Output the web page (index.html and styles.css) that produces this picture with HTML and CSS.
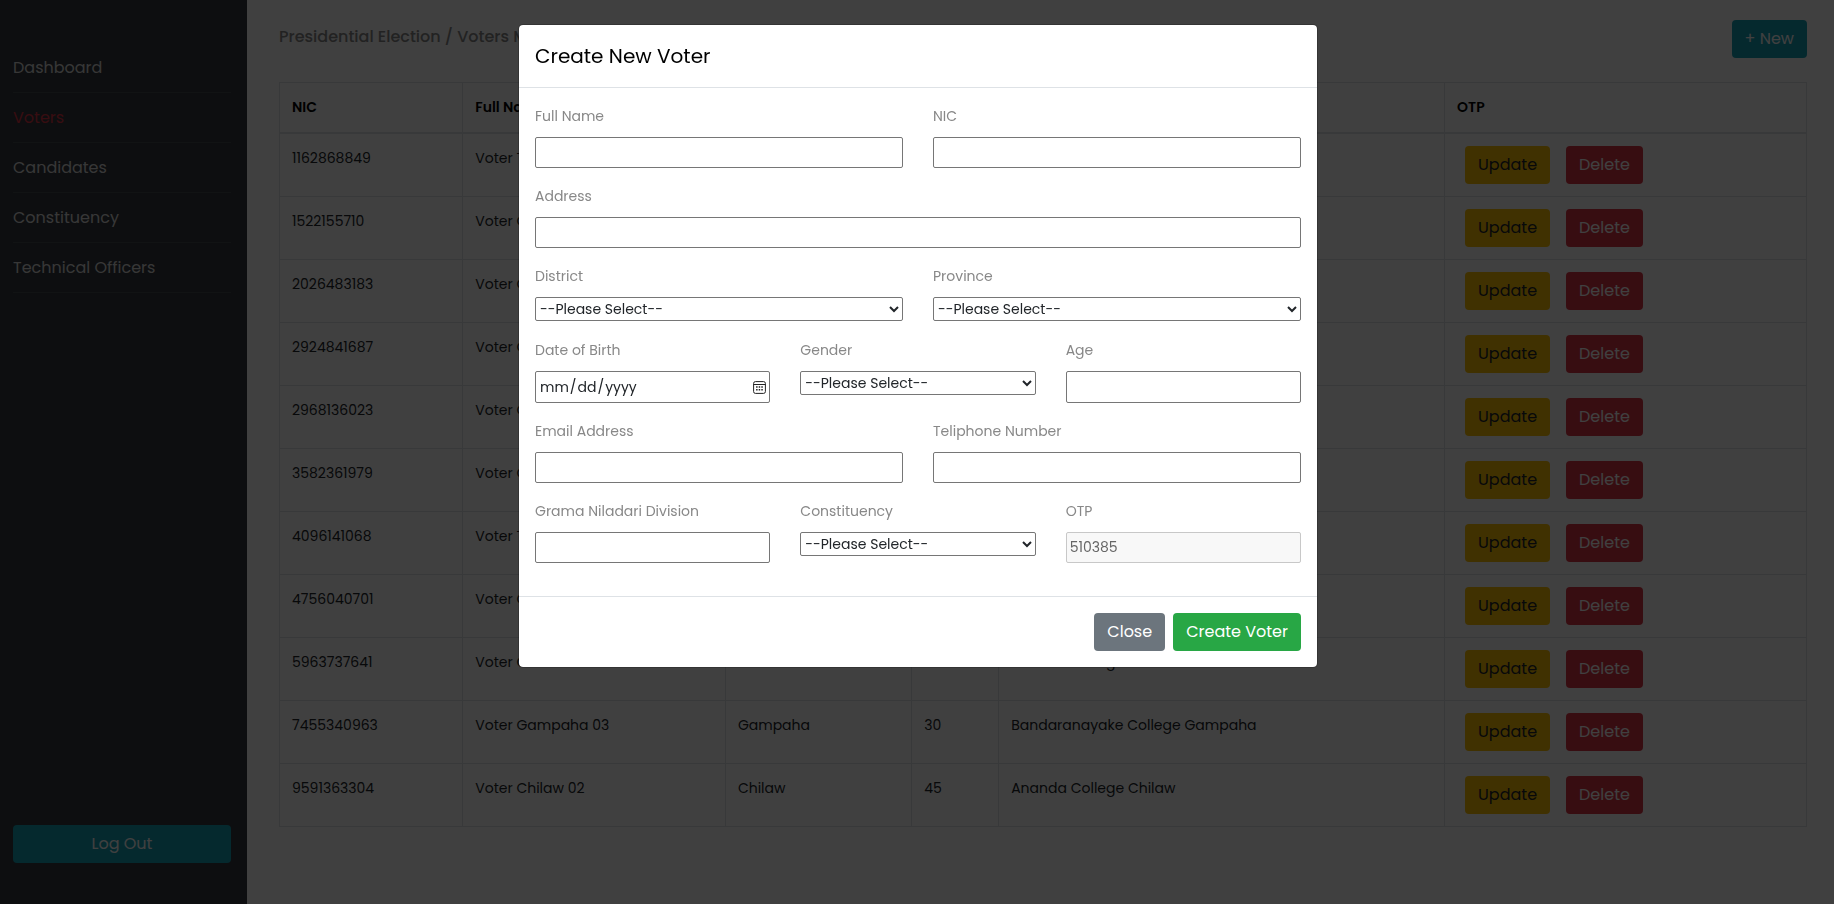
FILE: index.html
```html
<!DOCTYPE html>
<html lang="en">
<head>
<meta charset="utf-8">
<meta name="viewport" content="width=device-width, initial-scale=1">
<title>Voters Management</title>
<link rel="stylesheet" href="styles.css">
</head>
<body>
<div class="app">
  <aside class="sidebar">
    <nav class="nav">
      <a class="nav-link" href="#dashboard">Dashboard</a>
      <a class="nav-link active" href="#voters">Voters</a>
      <a class="nav-link" href="#candidates">Candidates</a>
      <a class="nav-link" href="#constituency">Constituency</a>
      <a class="nav-link" href="#officers">Technical Officers</a>
    </nav>
    <button class="btn btn-info" type="button">Log Out</button>
  </aside>
  <main class="main">
    <header class="topbar">
      <h1 class="page-title">Presidential Election / Voters Management</h1>
      <button class="btn btn-info" type="button">+ New</button>
    </header>
    <table class="table">
      <colgroup><col class="c-nic"><col class="c-name"><col class="c-district"><col class="c-age"><col class="c-const"><col></colgroup>
      <thead>
        <tr><th>NIC</th><th>Full Name</th><th>District</th><th>Age</th><th>Constituency</th><th>OTP</th></tr>
      </thead>
      <tbody>
        <tr><td>1162868849</td><td>Voter Test 01</td><td></td><td></td><td></td><td><div class="actions"><button class="btn btn-warning" type="button">Update</button><button class="btn btn-danger" type="button">Delete</button></div></td></tr>
        <tr><td>1522155710</td><td>Voter Gampaha</td><td></td><td></td><td></td><td><div class="actions"><button class="btn btn-warning" type="button">Update</button><button class="btn btn-danger" type="button">Delete</button></div></td></tr>
        <tr><td>2026483183</td><td>Voter Gampaha</td><td></td><td></td><td></td><td><div class="actions"><button class="btn btn-warning" type="button">Update</button><button class="btn btn-danger" type="button">Delete</button></div></td></tr>
        <tr><td>2924841687</td><td>Voter Gampaha</td><td></td><td></td><td></td><td><div class="actions"><button class="btn btn-warning" type="button">Update</button><button class="btn btn-danger" type="button">Delete</button></div></td></tr>
        <tr><td>2968136023</td><td>Voter Gampaha</td><td></td><td></td><td></td><td><div class="actions"><button class="btn btn-warning" type="button">Update</button><button class="btn btn-danger" type="button">Delete</button></div></td></tr>
        <tr><td>3582361979</td><td>Voter Chilaw</td><td></td><td></td><td></td><td><div class="actions"><button class="btn btn-warning" type="button">Update</button><button class="btn btn-danger" type="button">Delete</button></div></td></tr>
        <tr><td>4096141068</td><td>Voter Test 02</td><td></td><td></td><td></td><td><div class="actions"><button class="btn btn-warning" type="button">Update</button><button class="btn btn-danger" type="button">Delete</button></div></td></tr>
        <tr><td>4756040701</td><td>Voter Chilaw</td><td></td><td></td><td></td><td><div class="actions"><button class="btn btn-warning" type="button">Update</button><button class="btn btn-danger" type="button">Delete</button></div></td></tr>
        <tr><td>5963737641</td><td>Voter Chilaw</td><td></td><td></td><td>Ananda College Chilaw</td><td><div class="actions"><button class="btn btn-warning" type="button">Update</button><button class="btn btn-danger" type="button">Delete</button></div></td></tr>
        <tr><td>7455340963</td><td>Voter Gampaha 03</td><td>Gampaha</td><td>30</td><td>Bandaranayake College Gampaha</td><td><div class="actions"><button class="btn btn-warning" type="button">Update</button><button class="btn btn-danger" type="button">Delete</button></div></td></tr>
        <tr><td>9591363304</td><td>Voter Chilaw 02</td><td>Chilaw</td><td>45</td><td>Ananda College Chilaw</td><td><div class="actions"><button class="btn btn-warning" type="button">Update</button><button class="btn btn-danger" type="button">Delete</button></div></td></tr>
      </tbody>
    </table>
  </main>
</div>

<div class="backdrop">
  <form class="modal" role="dialog" aria-labelledby="modal-title">
    <header class="modal-header"><h2 class="modal-title" id="modal-title">Create New Voter</h2></header>
    <div class="modal-body">
      <div class="row">
        <div class="field"><label for="name">Full Name</label><input class="control" id="name" type="text"></div>
        <div class="field"><label for="nic">NIC</label><input class="control" id="nic" type="text"></div>
      </div>
      <div class="row">
        <div class="field"><label for="address">Address</label><input class="control" id="address" type="text"></div>
      </div>
      <div class="row">
        <div class="field"><label for="district">District</label><select class="select" id="district"><option>--Please Select--</option></select></div>
        <div class="field"><label for="province">Province</label><select class="select" id="province"><option>--Please Select--</option></select></div>
      </div>
      <div class="row">
        <div class="field"><label for="dob">Date of Birth</label><input class="control tall" id="dob" type="date"></div>
        <div class="field"><label for="gender">Gender</label><select class="select" id="gender"><option>--Please Select--</option></select></div>
        <div class="field"><label for="age">Age</label><input class="control tall" id="age" type="text"></div>
      </div>
      <div class="row">
        <div class="field"><label for="email">Email Address</label><input class="control" id="email" type="email"></div>
        <div class="field"><label for="phone">Teliphone Number</label><input class="control" id="phone" type="tel"></div>
      </div>
      <div class="row">
        <div class="field"><label for="division">Grama Niladari Division</label><input class="control" id="division" type="text"></div>
        <div class="field"><label for="constituency">Constituency</label><select class="select" id="constituency"><option>--Please Select--</option></select></div>
        <div class="field"><label for="otp">OTP</label><input class="control" id="otp" type="text" value="510385" disabled></div>
      </div>
    </div>
    <footer class="modal-footer">
      <button class="btn btn-secondary" type="button">Close</button>
      <button class="btn btn-success" type="button">Create Voter</button>
    </footer>
  </form>
</div>
</body>
</html>
```
FILE: styles.css
```css
*, *::before, *::after { box-sizing: border-box; }

body {
  margin: 0;
  font-family: Poppins, Inter, sans-serif;
  font-size: 14px;
  line-height: 24px;
  color: #212529;
  background: #fff;
}

h1, h2 { margin: 0; }

.app { display: flex; min-height: 100vh; }

.sidebar {
  display: flex;
  flex-direction: column;
  justify-content: space-between;
  flex: 0 0 247px;
  padding: 43px 16px 41px 13px;
  background: #343a40;
}

.nav { display: flex; flex-direction: column; }

.nav-link {
  padding: 13px 0 12px;
  border-bottom: 1px solid #454b51;
  color: #dcdcdc;
  font-size: 16px;
  text-decoration: none;
}

.nav-link.active { color: #dc3545; }

.main { flex: 1; min-width: 0; padding: 20px 27px 24px 32px; }

.topbar {
  display: flex;
  justify-content: space-between;
  align-items: flex-start;
  margin-bottom: 24px;
}

.page-title {
  padding-top: 5px;
  font-size: 16px;
  font-weight: 500;
  color: #888;
}

.btn {
  height: 38px;
  padding: 0 13px;
  border: 0;
  border-radius: 4px;
  font-family: inherit;
  font-size: 16px;
  line-height: 24px;
  color: #fff;
}

.btn-info { background: #17a2b8; }
.btn-warning { background: #ffc107; color: #212529; }
.btn-danger { background: #dc3545; }
.btn-secondary { background: #6c757d; }
.btn-success { background: #28a745; }

.table {
  width: 100%;
  table-layout: fixed;
  border-collapse: collapse;
}

.c-nic { width: 12%; }
.c-name { width: 17.2%; }
.c-district { width: 12.2%; }
.c-age { width: 5.7%; }
.c-const { width: 29.2%; }

.table th, .table td {
  padding: 12px;
  border: 1px solid #dee2e6;
  text-align: left;
  vertical-align: top;
}

.table th {
  padding-bottom: 13px;
  border-bottom-width: 2px;
  font-weight: 600;
  color: #000;
}

.actions { display: flex; gap: 16px; padding-left: 8px; }

.backdrop {
  position: fixed;
  inset: 0;
  display: flex;
  justify-content: center;
  align-items: flex-start;
  padding: 24px 24px 24px 26px;
  overflow: auto;
  background: rgba(0, 0, 0, 0.75);
}

.modal {
  width: 100%;
  max-width: 800px;
  border: 1px solid rgba(0, 0, 0, 0.2);
  border-radius: 5px;
  background: #fff;
  background-clip: padding-box;
}

.modal-header { padding: 16px; border-bottom: 1px solid #dee2e6; }

.modal-title {
  font-size: 20px;
  font-weight: 400;
  line-height: 30px;
  color: #000;
}

.modal-body {
  display: flex;
  flex-direction: column;
  gap: 16px;
  padding: 16px 16px 33px;
}

.row { display: flex; gap: 30px; }

.field {
  display: flex;
  flex: 1 1 0;
  flex-direction: column;
  gap: 9px;
  min-width: 0;
}

.field label { color: #888; }

.control, .select {
  width: 100%;
  border: 1px solid #767676;
  border-radius: 2px;
  background: #fff;
  font-family: inherit;
  font-size: 14px;
  color: #212529;
}

.control { height: 31px; padding: 1px 3px; }
.control.tall { height: 32px; }
.select { height: 24px; margin: 0 0 1px; }

.control::-webkit-calendar-picker-indicator {
  width: 13px;
  height: 13px;
  padding: 0;
  background: url("data:image/svg+xml,%3Csvg xmlns='http://www.w3.org/2000/svg' viewBox='0 0 13 13'%3E%3Crect x='.6' y='.6' width='11.8' height='11.8' rx='1.8' fill='none' stroke='%23222'/%3E%3Cpath d='M.6 3.5h11.8' stroke='%23222'/%3E%3Cpath d='M5.7 6h1.5M8.3 6h1.5M3.1 8.8h1.5M5.7 8.8h1.5M3.1 6h1.5M8.3 8.8h1.5' stroke='%23222' stroke-width='1.4'/%3E%3C/svg%3E") center / 13px 13px no-repeat;
}

.control:disabled {
  border-color: #c8c8c8;
  background: #f8f8f8;
  color: #666;
}

.modal-footer {
  display: flex;
  justify-content: flex-end;
  gap: 8px;
  padding: 16px;
  border-top: 1px solid #dee2e6;
}
```
